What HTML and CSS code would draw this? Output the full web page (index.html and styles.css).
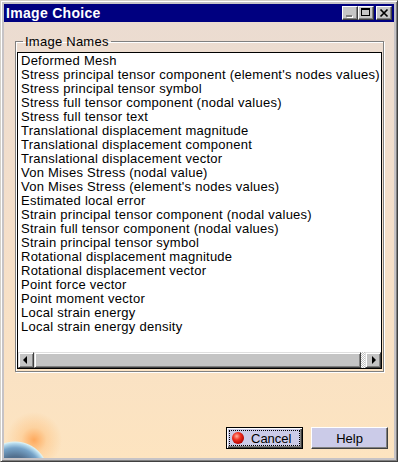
FILE: index.html
```html
<!DOCTYPE html>
<html lang="en">
<head>
  <meta charset="UTF-8" />
  <title>Image Choice</title>
  <link rel="stylesheet" href="styles.css">
</head>
<body>
  <div class="window">
    <div class="titlebar">
      <span class="title">Image Choice</span>
      <div class="caption-buttons">
        <span class="cap-btn">
          <svg width="14" height="12" viewBox="0 0 14 12"><rect x="4" y="9" width="6" height="2" fill="#fff"/><rect x="3" y="8" width="6" height="2" fill="#808080"/></svg>
        </span>
        <span class="cap-btn">
          <svg width="14" height="12" viewBox="0 0 14 12"><rect x="2" y="1" width="9" height="2" fill="#000"/><rect x="2.5" y="1.5" width="8" height="7" fill="none" stroke="#000"/></svg>
        </span>
        <span class="cap-btn close">
          <svg width="14" height="12" viewBox="0 0 14 12"><path d="M3.5 2.5 L10.5 9.5 M10.5 2.5 L3.5 9.5" stroke="#000" stroke-width="1.7"/></svg>
        </span>
      </div>
    </div>
    <div class="client">
      <fieldset class="group">
        <legend>Image Names</legend>
        <div class="listbox">
          <ul class="items">
            <li>Deformed Mesh</li>
            <li>Stress principal tensor component (element's nodes values)</li>
            <li>Stress principal tensor symbol</li>
            <li>Stress full tensor component (nodal values)</li>
            <li>Stress full tensor text</li>
            <li>Translational displacement magnitude</li>
            <li>Translational displacement component</li>
            <li>Translational displacement vector</li>
            <li>Von Mises Stress (nodal value)</li>
            <li>Von Mises Stress (element's nodes values)</li>
            <li>Estimated local error</li>
            <li>Strain principal tensor component (nodal values)</li>
            <li>Strain full tensor component (nodal values)</li>
            <li>Strain principal tensor symbol</li>
            <li>Rotational displacement magnitude</li>
            <li>Rotational displacement vector</li>
            <li>Point force vector</li>
            <li>Point moment vector</li>
            <li>Local strain energy</li>
            <li>Local strain energy density</li>
          </ul>
          <div class="hscroll">
            <span class="sb-btn">
              <svg width="14" height="14" viewBox="0 0 14 14"><path d="M4 7 L8 3 L8 11 Z" fill="#000"/></svg>
            </span>
            <span class="sb-thumb"></span>
            <span class="sb-track"></span>
            <span class="sb-btn">
              <svg width="14" height="14" viewBox="0 0 14 14"><path d="M10 7 L6 3 L6 11 Z" fill="#000"/></svg>
            </span>
          </div>
        </div>
      </fieldset>
      <div class="actions">
        <button class="btn default"><span class="focus"><span class="ball"></span>Cancel</span></button>
        <button class="btn">Help</button>
      </div>
    </div>
  </div>
</body>
</html>
```

FILE: styles.css
```css
body {
  margin: 0;
  font-family: "Liberation Sans", Arial, sans-serif;
  font-size: 13px;
}
.window {
  width: 398px;
  height: 462px;
  box-sizing: border-box;
  border: 1px solid;
  border-color: #d4d0c8 #404040 #404040 #d4d0c8;
  box-shadow: inset 1px 1px #fff, inset -1px -1px #808080;
  padding: 3px;
  background: #c6c3c6;
  display: flex;
  flex-direction: column;
}
.titlebar {
  height: 18px;
  background: #000080;
  display: flex;
  align-items: center;
  justify-content: space-between;
  padding: 0 2px;
}
.title {
  color: #fff;
  font-weight: bold;
  font-size: 14px;
  letter-spacing: 0.3px;
}
.caption-buttons {
  display: flex;
}
.cap-btn {
  width: 16px;
  height: 14px;
  box-sizing: border-box;
  border: 1px solid;
  border-color: #fff #404040 #404040 #fff;
  box-shadow: inset -1px -1px #808080;
  background: #c6c6c6;
  display: flex;
}
.cap-btn.close {
  margin-left: 2px;
}
.client {
  flex: 1;
  display: flex;
  flex-direction: column;
  padding: 0 8px 9px 11px;
  background:
    radial-gradient(circle 34px at 11px 453px, #3a4f6a 0, #52708f 55%, #76a3c8 80%, #b8dcee 93%, #dcf0f2 97%, rgba(220, 240, 242, 0) 100%),
    radial-gradient(circle 28px at 30px 418px, rgba(255, 150, 60, 0.75), rgba(255, 185, 110, 0.4) 45%, rgba(255, 210, 150, 0) 100%),
    linear-gradient(#ebdcd1, #f5dfc9 50%, #fde4c0);
}
.group {
  margin: 12px 2px 0 0;
  padding: 3px 1px 2px 1px;
  border: 1px solid #808080;
  box-shadow: 1px 1px #fff, inset 1px 1px #fff;
  min-width: 0;
}
.group legend {
  padding: 0 2px;
  margin-left: 6px;
  line-height: 15px;
  letter-spacing: 0.25px;
}
.listbox {
  border: 1px solid #000;
  background: #fff;
  display: flex;
  flex-direction: column;
}
.items {
  list-style: none;
  margin: 0;
  padding: 1px 0 0 3px;
  height: 298px;
  white-space: nowrap;
  overflow: hidden;
  letter-spacing: 0.25px;
}
.items li {
  line-height: 14px;
  height: 14px;
}
.hscroll {
  height: 16px;
  display: flex;
}
.sb-btn,
.sb-thumb {
  box-sizing: border-box;
  border: 1px solid;
  border-color: #dfdfdf #404040 #404040 #dfdfdf;
  box-shadow: inset 1px 1px #fff, inset -1px -1px #808080;
  background: #c4c4c4;
}
.sb-btn {
  width: 16px;
  display: flex;
}
.sb-thumb {
  width: 327px;
}
.sb-track {
  flex: 1;
  background: repeating-conic-gradient(#c0c0c0 0 25%, #fff 0 50%) 0 0 / 2px 2px;
}
.actions {
  margin-top: auto;
  margin-right: -2px;
  display: flex;
  justify-content: flex-end;
  gap: 8px;
}
.btn {
  width: 77px;
  height: 22px;
  box-sizing: border-box;
  padding: 0;
  border: 1px solid;
  border-color: #fff #404040 #404040 #fff;
  box-shadow: inset -1px -1px #808080;
  background: #cbcbe8;
  font-family: "Liberation Sans", Arial, sans-serif;
  font-size: 13px;
  color: #000;
}
.btn.default {
  border-color: #000;
  box-shadow: inset 1px 1px #fff, inset -1px -1px #404040, inset -2px -2px #808080;
  display: flex;
}
.focus {
  flex: 1;
  margin: 2px;
  border: 1px dotted #000;
  display: flex;
  align-items: center;
  gap: 7px;
  padding-left: 2px;
}
.ball {
  width: 12px;
  height: 12px;
  border-radius: 50%;
  background: radial-gradient(circle at 40% 35%, #ffb0a0 0, #f03020 35%, #b00000 75%, #600000 100%);
}
```
